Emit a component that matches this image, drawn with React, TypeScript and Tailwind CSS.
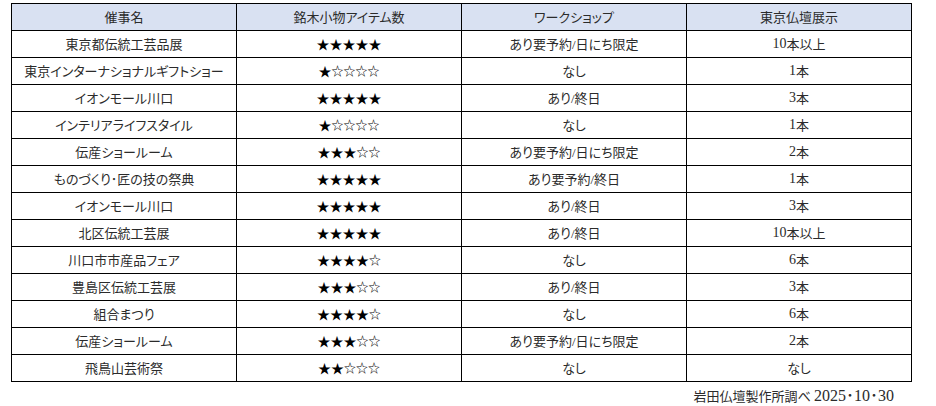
const rows: [string, number, string, string][] = [
  ['東京都伝統工芸品展', 5, 'あり要予約/日にち限定', '10本以上'],
  ['東京インターナショナルギフトショー', 1, 'なし', '1本'],
  ['イオンモール川口', 5, 'あり/終日', '3本'],
  ['インテリアライフスタイル', 1, 'なし', '1本'],
  ['伝産ショールーム', 3, 'あり要予約/日にち限定', '2本'],
  ['ものづくり･匠の技の祭典', 5, 'あり要予約/終日', '1本'],
  ['イオンモール川口', 5, 'あり/終日', '3本'],
  ['北区伝統工芸展', 5, 'あり/終日', '10本以上'],
  ['川口市市産品フェア', 4, 'なし', '6本'],
  ['豊島区伝統工芸展', 3, 'あり/終日', '3本'],
  ['組合まつり', 4, 'なし', '6本'],
  ['伝産ショールーム', 3, 'あり要予約/日にち限定', '2本'],
  ['飛鳥山芸術祭', 2, 'なし', 'なし'],
];

const headers = ['催事名', '銘木小物アイテム数', 'ワークショップ', '東京仏壇展示'];

function Stars({ n }: { n: number }) {
  return (
    <span className="text-black [font-feature-settings:normal]">
      {'★'.repeat(n)}
      <span className="text-[12px]">{'☆'.repeat(5 - n)}</span>
    </span>
  );
}

// digits a touch larger, like the mincho numerals in the source
function Count({ v }: { v: string }) {
  const m = v.match(/^(\d+)(.*)$/);
  if (!m) return <>{v}</>;
  return (
    <>
      <span className="text-[14px]">{m[1]}</span>
      {m[2]}
    </>
  );
}

const cell = 'h-[27px] flex items-center justify-center border-r border-b border-black';

export default function App() {
  return (
    <div
      className="w-[936px] h-[406px] bg-white pl-[11px] pt-[3px] text-[13px] text-[#2b2b2b] [font-feature-settings:'palt']"
      style={{ fontFamily: '"Liberation Serif", "Noto Sans CJK JP", sans-serif' }}
    >
      <div className="w-[901px] grid grid-cols-4 border-l border-t border-black leading-none">
        {headers.map(h => (
          <div key={h} className={`${cell} bg-[#d9e1f2]`}>{h}</div>
        ))}
        {rows.map((r, i) => (
          <div key={i} className="contents">
            <div className={cell}>{r[0]}</div>
            <div className={cell}><Stars n={r[1]} /></div>
            <div className={cell}>{r[2]}</div>
            <div className={cell}><Count v={r[3]} /></div>
          </div>
        ))}
      </div>
      <div className="w-[883px] text-right mt-[6px] leading-4">
        岩田仏壇製作所調べ <span className="text-[16px]">2025･10･30</span>
      </div>
    </div>
  );
}
